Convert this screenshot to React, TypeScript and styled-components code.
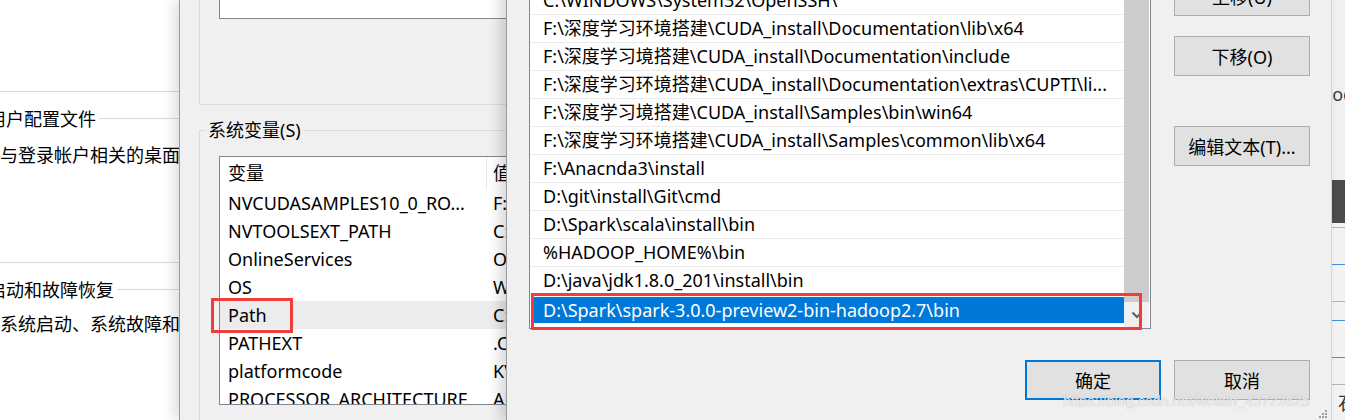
import React from "react";
import styled, { createGlobalStyle } from "styled-components";

const GlobalStyle = createGlobalStyle`
	html, body {
		margin: 0;
		padding: 0;
	}
	body {
		width: 1345px;
		height: 420px;
		overflow: hidden;
		font-family: "Noto Sans", "Noto Sans CJK SC", sans-serif;
		font-size: 18px;
		color: #000;
		background: #fff;
	}
`;

const Desktop = styled.div`
	position: relative;
	width: 1345px;
	height: 420px;
	overflow: hidden;
	background: #fff;
`;

/* ---------- system properties page (back) ---------- */

const SettingsPane = styled.section`
	position: absolute;
	left: -20px;
	top: 0;
	width: 560px;
	height: 420px;
	background: #fff;
	z-index: 1;
	display: flex;
	flex-direction: column;
`;

const TopRule = styled.div`
	flex: none;
	height: 92px;
	box-sizing: border-box;
	border-bottom: 1px solid #dadada;
`;

const SettingsGroup = styled.div<{ $height?: number }>`
	flex: none;
	box-sizing: border-box;
	height: ${(p) => (p.$height ? `${p.$height}px` : "auto")};
	border-bottom: ${(p) => (p.$height ? "1px solid #dadada" : "none")};
	display: flex;
	flex-direction: column;
`;

const GroupHead = styled.div`
	display: flex;
	align-items: center;
	gap: 3px;
	height: 24px;
	margin-top: 14px;
	padding-left: 8px;
	white-space: nowrap;
	&::after {
		content: "";
		flex: 1;
		height: 1px;
		background: #dadada;
	}
`;

const GroupText = styled.div<{ $top: number }>`
	margin-top: ${(p) => p.$top}px;
	padding-left: 20px;
	line-height: 24px;
	white-space: nowrap;
`;

/* ---------- environment variables window (middle) ---------- */

const EnvWindow = styled.section`
	position: absolute;
	left: 179px;
	top: 0;
	width: 720px;
	height: 420px;
	overflow: hidden;
	background: #f0f0f0;
	border-left: 1px solid #9c9c9c;
	box-shadow: -6px 0 12px rgba(0, 0, 0, 0.12);
	z-index: 2;
	display: flex;
	flex-direction: column;
	align-items: flex-start;
`;

const UserGroup = styled.div`
	flex: none;
	margin-left: 19px;
	width: 640px;
	height: 105px;
	box-sizing: border-box;
	border: 1px solid #dcdcdc;
	border-top: none;
	padding-left: 19px;
`;

const UserList = styled.div`
	height: 19px;
	box-sizing: border-box;
	background: #fff;
	border: 1px solid #828790;
	border-top: none;
`;

const SystemGroup = styled.fieldset`
	flex: none;
	margin: 13px 0 0 19px;
	padding: 0 0 0 19px;
	width: 640px;
	height: 330px;
	min-width: 0;
	box-sizing: border-box;
	border: 1px solid #dcdcdc;
`;

const GroupLegend = styled.legend`
	margin-left: -13px;
	padding: 0 2px;
	line-height: 24px;
`;

const VarTable = styled.div`
	margin-top: 14px;
	width: 600px;
	height: 249px;
	box-sizing: border-box;
	background: #fff;
	border: 1px solid #828790;
	overflow-x: visible;
	overflow-y: clip;
`;

const VarRow = styled.div<{ $head?: boolean; $hover?: boolean }>`
	position: relative;
	display: grid;
	grid-template-columns: 267px 1fr;
	height: ${(p) => (p.$head ? 32 : 28)}px;
	line-height: ${(p) => (p.$head ? 32 : 28)}px;
	background: ${(p) => (p.$hover ? "#ececec" : "transparent")};
	white-space: nowrap;
`;

const NameCell = styled.div<{ $head?: boolean }>`
	position: relative;
	padding-left: 8px;
	box-sizing: border-box;
	border-right: ${(p) => (p.$head ? "1px solid #e5e5e5" : "none")};
`;

const ValueCell = styled.div`
	padding-left: 6px;
	overflow: hidden;
`;

const Callout = styled.div<{ $w: number; $h: number; $x: number; $y: number }>`
	position: absolute;
	left: ${(p) => p.$x}px;
	top: ${(p) => p.$y}px;
	width: ${(p) => p.$w}px;
	height: ${(p) => p.$h}px;
	box-sizing: border-box;
	border: 3px solid #f23b3b;
	pointer-events: none;
`;

/* ---------- edit environment variable dialog (front) ---------- */

const EditDialog = styled.section`
	position: absolute;
	left: 506px;
	top: -42px;
	width: 826px;
	height: 464px;
	box-sizing: border-box;
	padding: 0 21px 0 22px;
	background: #f0f0f0;
	border-left: 1px solid #9a9a9a;
	border-right: 1px solid #d4d4d4;
	box-shadow: -6px 0 12px rgba(0, 0, 0, 0.16);
	z-index: 3;
	display: flex;
	flex-direction: column;
`;

const DialogBody = styled.div`
	flex: none;
	display: flex;
	align-items: flex-start;
	gap: 23px;
`;

const PathList = styled.div`
	position: relative;
	flex: none;
	width: 622px;
	height: 371px;
	box-sizing: border-box;
	background: #fff;
	border: 1px solid #828790;
	display: flex;
`;

const PathItems = styled.div`
	width: 594px;
	overflow: hidden;
	display: flex;
	flex-direction: column;
`;

const PathRow = styled.div`
	flex: none;
	height: 28px;
	box-sizing: border-box;
	border-bottom: 1px solid #ebebeb;
	padding-left: 13px;
	line-height: 27px;
	white-space: nowrap;
	overflow: hidden;
`;

const EditRow = styled.div`
	flex: 1;
	padding: 2px 0 0 2px;
`;

const EditSelection = styled.div`
	height: 26px;
	padding-left: 11px;
	line-height: 26px;
	background: #0078d7;
	color: #fff;
	white-space: nowrap;
`;

const Scrollbar = styled.div`
	width: 25px;
	margin-right: 1px;
	display: flex;
	flex-direction: column;
	background: #f0f0f0;
`;

const ScrollThumb = styled.div`
	flex: 1;
	background: #cdcdcd;
`;

const ScrollArrow = styled.div`
	height: 26px;
	display: flex;
	align-items: center;
	justify-content: center;
`;

const ButtonColumn = styled.div`
	display: flex;
	flex-direction: column;
	padding-top: 18px;
`;

const DialogButton = styled.button<{ $primary?: boolean; $space?: number }>`
	width: 136px;
	height: 40px;
	margin-top: ${(p) => p.$space ?? 0}px;
	box-sizing: border-box;
	padding: 0;
	font: inherit;
	color: #000;
	background: #e1e1e1;
	border: ${(p) => (p.$primary ? "2px solid #0078d7" : "1px solid #adadad")};
	white-space: nowrap;
`;

const DialogFooter = styled.div`
	flex: none;
	display: flex;
	justify-content: flex-end;
	gap: 13px;
	margin-top: 31px;
`;

const Grip = styled.svg`
	position: absolute;
	right: 3px;
	bottom: 3px;
`;

/* ---------- window peeking out at the right ---------- */

const SideWindow = styled.section`
	position: absolute;
	left: 1300px;
	top: 0;
	width: 80px;
	height: 420px;
	background: #f3f3f3;
	z-index: 1;
	display: flex;
	flex-direction: column;
`;

const SideHeader = styled.div`
	flex: none;
	height: 180px;
	padding: 82px 0 0 19px;
	box-sizing: border-box;
	line-height: 24px;
	color: #3c3c3c;
	background: #f0f0f0;
`;

const SideBand = styled.div`
	flex: none;
	height: 43px;
	background: #4b4b4b;
`;

const SideRow = styled.div<{ $h: number; $line: string }>`
	flex: none;
	height: ${(p) => p.$h}px;
	box-sizing: border-box;
	border-bottom: 1px solid ${(p) => p.$line};
`;

const SideGlyph = styled.div`
	padding: 6px 0 0 38px;
	line-height: 24px;
	color: #333;
`;

const Watermark = styled.div`
	position: absolute;
	left: 1063px;
	top: 391px;
	z-index: 5;
	font-family: "Liberation Sans", Arial, sans-serif;
	font-size: 14.5px;
	line-height: 20px;
	color: rgba(255, 255, 255, 0.85);
	text-shadow: 0 0 1px rgba(0, 0, 0, 0.35);
	white-space: nowrap;
`;

const systemVars = [
	{ name: "NVCUDASAMPLES10_0_RO...", value: "F:\\深度学习环境搭建\\CUDA_install\\Samples" },
	{ name: "NVTOOLSEXT_PATH", value: "C:\\Program Files\\NVIDIA Corporation\\NvToolsExt\\" },
	{ name: "OnlineServices", value: "Online Services" },
	{ name: "OS", value: "Windows_NT" },
	{ name: "Path", value: "C:\\Program Files (x86)\\Common Files\\Oracle\\Java\\javapath;" },
	{ name: "PATHEXT", value: ".COM;.EXE;.BAT;.CMD;.VBS;.VBE;.JS;.JSE;.WSF;.WSH;.MSC" },
	{ name: "platformcode", value: "KV" },
	{ name: "PROCESSOR_ARCHITECTURE", value: "AMD64" },
];

const pathEntries = [
	"C:\\WINDOWS\\System32\\WindowsPowerShell\\v1.0\\",
	"C:\\WINDOWS\\System32\\OpenSSH\\",
	"F:\\深度学习环境搭建\\CUDA_install\\Documentation\\lib\\x64",
	"F:\\深度学习境搭建\\CUDA_install\\Documentation\\include",
	"F:\\深度学习环境搭建\\CUDA_install\\Documentation\\extras\\CUPTI\\li...",
	"F:\\深度学习境搭建\\CUDA_install\\Samples\\bin\\win64",
	"F:\\深度学习环境搭建\\CUDA_install\\Samples\\common\\lib\\x64",
	"F:\\Anacnda3\\install",
	"D:\\git\\install\\Git\\cmd",
	"D:\\Spark\\scala\\install\\bin",
	"%HADOOP_HOME%\\bin",
	"D:\\java\\jdk1.8.0_201\\install\\bin",
];

const sideRows = [
	{ h: 5, line: "#b4b4b4" },
	{ h: 37, line: "#3f8fdc" },
	{ h: 37, line: "#b4b4b4" },
	{ h: 19, line: "#3f8fdc" },
	{ h: 37, line: "#3f8fdc" },
	{ h: 27, line: "#b4b4b4" },
];

export default function App() {
	return (
		<Desktop>
			<GlobalStyle />

			<SettingsPane>
				<TopRule />
				<SettingsGroup $height={171}>
					<GroupHead>用户配置文件</GroupHead>
					<GroupText $top={13}>与登录帐户相关的桌面设置</GroupText>
				</SettingsGroup>
				<SettingsGroup>
					<GroupHead>启动和故障恢复</GroupHead>
					<GroupText $top={11}>系统启动、系统故障和调试信息</GroupText>
				</SettingsGroup>
			</SettingsPane>

			<SideWindow>
				<SideHeader>Doc</SideHeader>
				<SideBand />
				{sideRows.map((r, i) => (
					<SideRow key={i} $h={r.h} $line={r.line} />
				))}
				<SideGlyph>石</SideGlyph>
			</SideWindow>

			<EnvWindow>
				<UserGroup>
					<UserList />
				</UserGroup>
				<SystemGroup>
					<GroupLegend>系统变量(S)</GroupLegend>
					<VarTable>
						<VarRow $head>
							<NameCell $head>变量</NameCell>
							<ValueCell>值</ValueCell>
						</VarRow>
						{systemVars.map((v) => (
							<VarRow key={v.name} $hover={v.name === "Path"}>
								<NameCell>
									{v.name}
									{v.name === "Path" && <Callout $x={-9} $y={-3} $w={82} $h={35} />}
								</NameCell>
								<ValueCell>{v.value}</ValueCell>
							</VarRow>
						))}
					</VarTable>
				</SystemGroup>
			</EnvWindow>

			<EditDialog>
				<DialogBody>
					<PathList>
						<PathItems>
							{pathEntries.map((p) => (
								<PathRow key={p}>{p}</PathRow>
							))}
							<EditRow>
								<EditSelection>D:\Spark\spark-3.0.0-preview2-bin-hadoop2.7\bin</EditSelection>
							</EditRow>
						</PathItems>
						<Scrollbar>
							<ScrollThumb />
							<ScrollArrow>
								<svg width="12" height="8" viewBox="0 0 12 8">
									<polyline points="1.5,1.5 6,6 10.5,1.5" fill="none" stroke="#606060" strokeWidth="2" />
								</svg>
							</ScrollArrow>
						</Scrollbar>
						<Callout $x={1} $y={334} $w={611} $h={37} />
					</PathList>
					<ButtonColumn>
						<DialogButton>上移(U)</DialogButton>
						<DialogButton $space={20}>下移(O)</DialogButton>
						<DialogButton $space={50}>编辑文本(T)...</DialogButton>
					</ButtonColumn>
				</DialogBody>
				<DialogFooter>
					<DialogButton $primary>确定</DialogButton>
					<DialogButton>取消</DialogButton>
				</DialogFooter>
				<Grip width="10" height="10" viewBox="0 0 10 10">
					<rect x="7" y="1" width="2" height="2" fill="#a0a0a0" />
					<rect x="4" y="4" width="2" height="2" fill="#a0a0a0" />
					<rect x="7" y="4" width="2" height="2" fill="#a0a0a0" />
					<rect x="1" y="7" width="2" height="2" fill="#a0a0a0" />
					<rect x="4" y="7" width="2" height="2" fill="#a0a0a0" />
					<rect x="7" y="7" width="2" height="2" fill="#a0a0a0" />
				</Grip>
			</EditDialog>

			<Watermark>https://blog.csdn.net/weixin_43723625</Watermark>
		</Desktop>
	);
}
